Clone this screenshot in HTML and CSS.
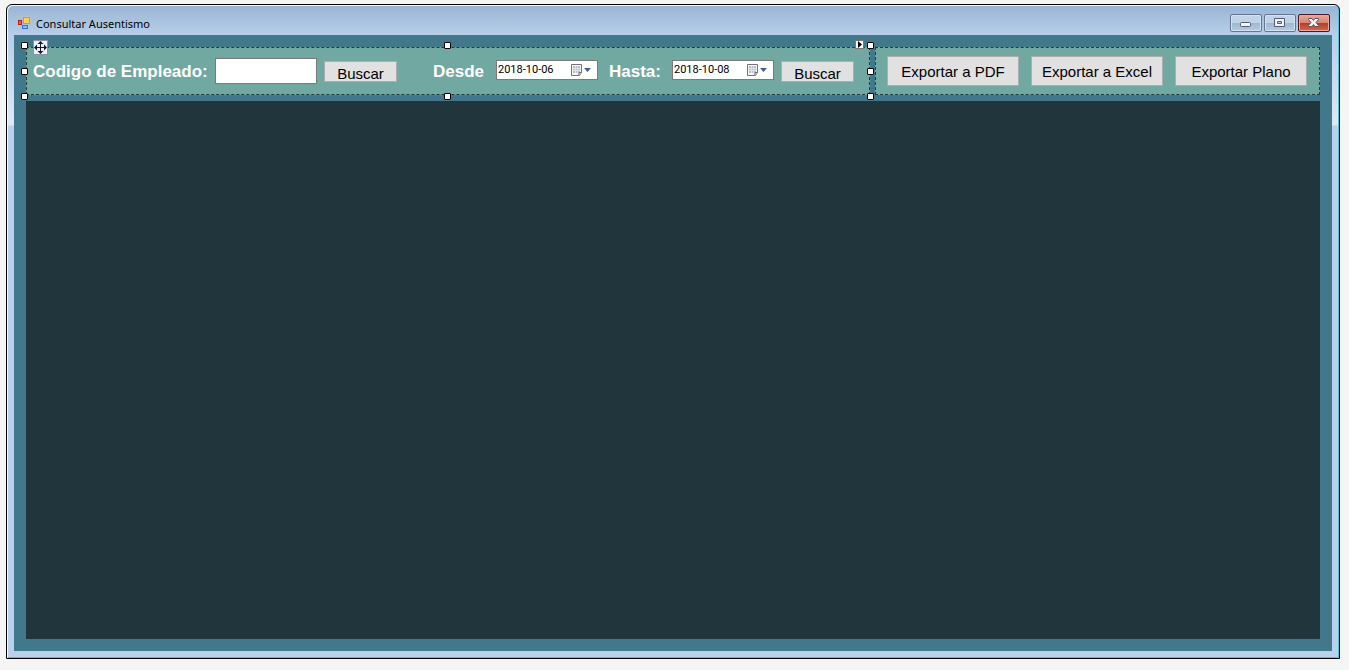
FILE: index.html
```html
<!DOCTYPE html>
<html lang="es">
<head>
<meta charset="utf-8">
<title>Consultar Ausentismo</title>
<link rel="stylesheet" href="styles.css">
</head>
<body>
<div class="window">
  <header class="titlebar">
    <svg class="app-icon" width="14" height="14" viewBox="0 0 14 14" aria-hidden="true">
      <path d="M.5 13.500V.5h13v13z" fill="none" stroke="#b9c3cf" stroke-dasharray="2 1"/>
      <rect x="1" y="4" width="4" height="5" fill="#b3200f"/>
      <rect x="2" y="5" width="2" height="3" fill="#f0604a"/>
      <rect x="6.500" y="1.500" width="6" height="6" fill="#ffd34f" stroke="#d99b10"/>
      <rect x="5.500" y="9.500" width="5" height="3" fill="#8fb9fb" stroke="#3b6fd0"/>
    </svg>
    <h1 class="title">Consultar Ausentismo</h1>
    <div class="window-controls">
      <button class="control" type="button" aria-label="Minimizar">
        <svg width="30" height="16" viewBox="0 0 30 16"><rect x="9.500" y="7.500" width="10" height="4" rx="1" fill="#f4f4f4" stroke="#545a6e"/></svg>
      </button>
      <button class="control" type="button" aria-label="Maximizar">
        <svg width="30" height="16" viewBox="0 0 30 16"><path d="M9.500 3.500h10v8h-10zM12.500 6.500v2h4v-2z" fill="#f4f4f4" stroke="#545a6e" fill-rule="evenodd"/></svg>
      </button>
      <button class="control control-close" type="button" aria-label="Cerrar">
        <svg width="30" height="16" viewBox="0 0 30 16"><path d="M9.500 3.500h3.500L14.500 5.500l1.500-2h3.500v1L17 7.500l2.500 3v1H16l-1.500-2-1.500 2H9.500v-1l2.500-3-2.500-3z" fill="#f6f6f6" stroke="#5e5364"/></svg>
      </button>
    </div>
  </header>
  <main class="client">
    <div class="toolbar">
      <form class="panel filters">
        <div class="group">
          <label class="label label-code" for="codigo">Codigo de Empleado:</label>
          <input class="code-input" id="codigo" type="text">
          <button class="button button-small" type="button">Buscar</button>
        </div>
        <div class="group">
          <label class="label label-date" for="desde">Desde</label>
          <div class="date">
            <input class="date-input" id="desde" type="text" value="2018-10-06">
            <button class="date-button" type="button" aria-label="Abrir calendario">
              <svg width="22" height="14" viewBox="0 0 22 14"><path d="M1.500 1.500h10v8l-2 3h-8z" fill="#f4f4f4" stroke="#77716f"/><path d="M3 3h7v7H3z" fill="#b7bdcb"/><path d="M5.500 3v7M7.500 3v7M3 5.500h7M3 7.500h7" stroke="#dde1ea"/><path d="M9 12.500v-3h3" fill="#d5d5d5" stroke="#77716f"/><path d="M14 5h7l-3.500 4z" fill="#435a93"/></svg>
            </button>
          </div>
          <label class="label label-date label-until" for="hasta">Hasta:</label>
          <div class="date">
            <input class="date-input" id="hasta" type="text" value="2018-10-08">
            <button class="date-button" type="button" aria-label="Abrir calendario">
              <svg width="22" height="14" viewBox="0 0 22 14"><path d="M1.500 1.500h10v8l-2 3h-8z" fill="#f4f4f4" stroke="#77716f"/><path d="M3 3h7v7H3z" fill="#b7bdcb"/><path d="M5.500 3v7M7.500 3v7M3 5.500h7M3 7.500h7" stroke="#dde1ea"/><path d="M9 12.500v-3h3" fill="#d5d5d5" stroke="#77716f"/><path d="M14 5h7l-3.500 4z" fill="#435a93"/></svg>
            </button>
          </div>
          <button class="button button-small" type="button">Buscar</button>
        </div>
        <div class="selection" aria-hidden="true">
          <span class="handle top left"></span><span class="handle top center"></span><span class="handle top right"></span>
          <span class="handle middle left"></span><span class="handle middle right"></span>
          <span class="handle bottom left"></span><span class="handle bottom center"></span><span class="handle bottom right"></span>
          <svg class="move" width="15" height="15" viewBox="0 0 15 15"><rect x=".5" y=".5" width="14" height="14" fill="#eef1f8" stroke="#8793ad"/><path d="M7.500 2v11M2 7.500h11" stroke="#15192a"/><path d="M7.500 1l3 3h-6zM7.500 14l3-3h-6zM1 7.500l3-3v6zM14 7.500l-3-3v6z" fill="#15192a"/></svg>
          <svg class="tag" width="9" height="9" viewBox="0 0 9 9"><rect x=".5" y=".5" width="8" height="8" fill="#fff" stroke="#777"/><path d="M3 1v7l4-3.500z" fill="#000"/></svg>
        </div>
      </form>
      <div class="panel exports">
        <button class="button button-large" type="button">Exportar a PDF</button>
        <button class="button button-large" type="button">Exportar a Excel</button>
        <button class="button button-large" type="button">Exportar Plano</button>
      </div>
    </div>
    <section class="grid" aria-label="Resultados"></section>
  </main>
</div>
</body>
</html>
```
FILE: styles.css
```css
* { box-sizing: border-box; }

body {
  margin: 0;
  min-height: 100vh;
  padding: 4px 9px 11px 6px;
  display: flex;
  background: #f5f5f5;
  font-family: "Liberation Sans", Arial, sans-serif;
}

.window {
  flex: 1;
  display: flex;
  flex-direction: column;
  padding: 0 7px 7px;
  border: 1px solid #000;
  border-radius: 6px 6px 0 0;
  background: linear-gradient(#99b4d3 0, #b7cfe9 30px, #dfe9f5 120px, #b9d1ea 121px);
  box-shadow: inset 1px 1px #f4f8fc, inset -1px -1px #33cbe8;
}

.titlebar {
  height: 30px;
  display: flex;
  align-items: center;
  padding: 0 2px 0 3px;
}

.app-icon {
  margin-top: 5px;
  margin-right: 5px;
}

.title {
  flex: 1;
  margin: 0;
  padding-top: 8px;
  font: 11px/18px "Noto Sans", sans-serif;
  color: #000;
}

.window-controls {
  display: flex;
  gap: 2px;
  padding-top: 5px;
}

.control {
  width: 32px;
  height: 18px;
  padding: 0;
  border: 1px solid #65758f;
  border-radius: 2px;
  background: linear-gradient(#c0d3e8 0 50%, #9db8d3 50%, #b5cce4);
  box-shadow: inset 0 0 0 1px #d5e3f1;
}

.control svg { display: block; }

.control-close {
  border-color: #4d1620;
  background: linear-gradient(#e9a79b, #d98373 50%, #b93a20 50%, #d26a4d);
  box-shadow: inset 0 0 0 1px #e7aaa0;
}

.client {
  flex: 1;
  display: flex;
  flex-direction: column;
  gap: 6px;
  padding: 12px;
  background: #41788b;
}

.toolbar {
  display: flex;
  gap: 5px;
}

.panel {
  height: 48px;
  display: flex;
  align-items: center;
  border: 1px dashed #243b40;
  background: #71a8a1;
}

.filters {
  position: relative;
  flex: 1;
  justify-content: space-between;
  padding: 0 15px 0 6px;
}

.exports {
  gap: 12px;
  padding: 0 12px 0 11px;
}

.group {
  display: flex;
  align-items: center;
}

.label {
  padding-top: 2px;
  font-size: 17px;
  font-weight: bold;
  line-height: 20px;
  color: #fff;
  white-space: nowrap;
}

.label-code { width: 182px; }
.label-date { width: 63px; }
.label-until { margin-left: 11px; }

.code-input {
  width: 102px;
  height: 26px;
  border: 1px solid #7a7a7a;
  background: #fff;
  font: 15px "Liberation Sans", sans-serif;
}

.date {
  width: 102px;
  height: 20px;
  margin-bottom: 2px;
  display: flex;
  align-items: center;
  border: 1px solid #7a7a7a;
  background: #fff;
}

.date-input {
  flex: 1;
  min-width: 0;
  padding: 0 0 0 1px;
  border: 0;
  background: none;
  font: 11px/18px Roboto, sans-serif;
  color: #000;
}

.date-button {
  padding: 0;
  margin-right: 5px;
  border: 0;
  background: none;
}

.date-button svg { display: block; }

.button {
  padding: 0;
  border: 1px solid #adadad;
  background: #e1e1e1;
  font: 15px/18px "Liberation Sans", Arial, sans-serif;
  color: #000;
}

.button-small {
  width: 73px;
  height: 21px;
  margin-left: 7px;
  padding-top: 3px;
}

.button-large {
  width: 132px;
  height: 30px;
  padding-top: 2px;
}

.selection {
  position: absolute;
  inset: -2px;
  border: 1px dotted #806c70;
  border-top-color: transparent;
  pointer-events: none;
}

.handle {
  position: absolute;
  width: 7px;
  height: 7px;
  border: 1px solid #000;
  border-radius: 1px;
  background: #fff;
}

.top { top: -5px; }
.middle { top: calc(50% - 3px); }
.bottom { bottom: -5px; }
.left { left: -5px; }
.center { left: calc(50% - 4px); }
.right { right: -4px; }

.move { position: absolute; top: -7px; left: 7px; }
.tag { position: absolute; top: -7px; right: 6px; }

.grid {
  flex: 1;
  background: #20363c;
}
```
